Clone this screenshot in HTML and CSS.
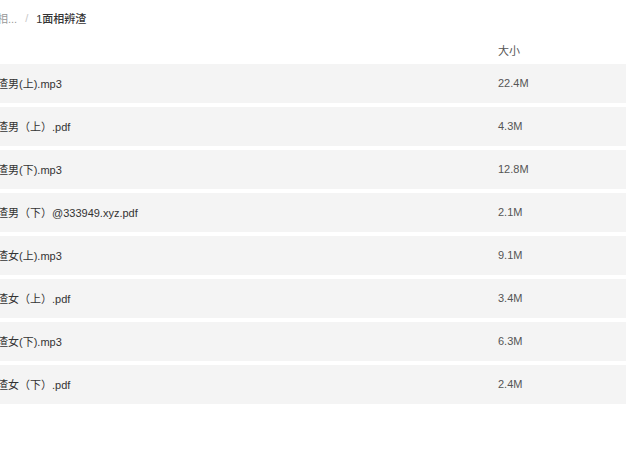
FILE: index.html
```html
<!DOCTYPE html>
<html lang="zh-CN">
  <head>
    <meta charset="UTF-8" />
    <meta name="viewport" content="width=device-width, initial-scale=1.0" />
    <title>1面相辨渣</title>
    <link rel="stylesheet" href="styles.css">
  </head>
  <body>
    <div class="page">
      <!-- Breadcrumb -->
      <div class="crumbs">
        <span class="crumb-prev">相...</span>
        <span class="crumb-sep">/</span>
        <span class="crumb-current">1面相辨渣</span>
      </div>

      <!-- File list -->
      <div class="list-head">
        <span class="col-name"></span>
        <span class="col-size">大小</span>
      </div>
      <ul class="file-list">
        <li class="file-row"><span class="col-name">渣男(上).mp3</span><span class="col-size">22.4M</span></li>
        <li class="file-row"><span class="col-name">渣男（上）.pdf</span><span class="col-size">4.3M</span></li>
        <li class="file-row"><span class="col-name">渣男(下).mp3</span><span class="col-size">12.8M</span></li>
        <li class="file-row"><span class="col-name">渣男（下）@333949.xyz.pdf</span><span class="col-size">2.1M</span></li>
        <li class="file-row"><span class="col-name">渣女(上).mp3</span><span class="col-size">9.1M</span></li>
        <li class="file-row"><span class="col-name">渣女（上）.pdf</span><span class="col-size">3.4M</span></li>
        <li class="file-row"><span class="col-name">渣女(下).mp3</span><span class="col-size">6.3M</span></li>
        <li class="file-row"><span class="col-name">渣女（下）.pdf</span><span class="col-size">2.4M</span></li>
      </ul>
    </div>
  </body>
</html>
```

FILE: styles.css
```css
body {
  margin: 0;
  background: #fff;
  font-family: "Liberation Sans", "Noto Sans CJK SC", sans-serif;
  font-size: 11px;
  color: #333;
  overflow: hidden;
}

.page {
  margin-left: -3px; /* list is scrolled a little to the right */
  width: 640px;
}

.crumbs {
  display: flex;
  align-items: center;
  gap: 8px;
  height: 35px;
}

.crumb-prev {
  color: #999;
}

.crumb-sep {
  color: #c8c8c8;
}

.crumb-current {
  color: #333;
  font-weight: 500;
}

.list-head,
.file-row {
  display: grid;
  grid-template-columns: 501px 1fr;
  align-items: center;
}

.list-head {
  height: 29px;
  color: #555;
}

.file-list {
  list-style: none;
  margin: 0;
  padding: 0;
  display: flex;
  flex-direction: column;
  gap: 4px;
}

.file-row {
  height: 39px;
  padding-bottom: 1px;
  box-sizing: border-box;
  background: #f4f4f4;
}

.file-row .col-size {
  color: #555;
}
```
